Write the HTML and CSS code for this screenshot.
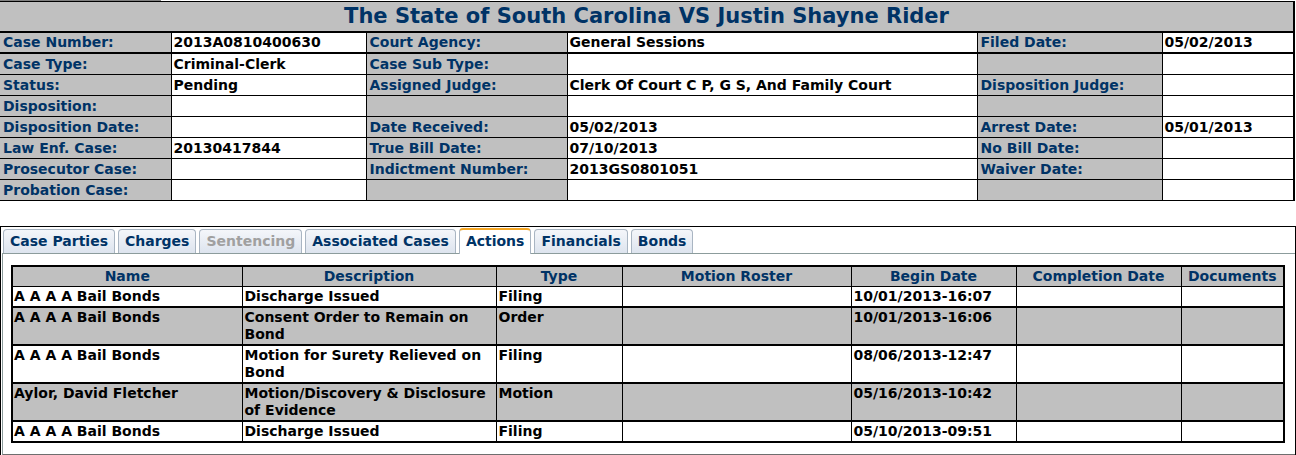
FILE: index.html
```html
<!DOCTYPE html>
<html lang="en">
<head>
  <meta charset="UTF-8" />
  <title>Case Details</title>
  <link rel="stylesheet" href="styles.css">
</head>
<body>
  <div class="scroll-strip"></div>

  <table class="case-table">
    <colgroup>
      <col class="c1"><col class="c2"><col class="c3"><col class="c4"><col class="c5"><col class="c6">
    </colgroup>
    <tr>
      <th colspan="6" class="title">The State of South Carolina VS Justin Shayne Rider</th>
    </tr>
    <tr class="first">
      <td class="lbl">Case Number:</td><td>2013A0810400630</td>
      <td class="lbl">Court Agency:</td><td>General Sessions</td>
      <td class="lbl">Filed Date:</td><td>05/02/2013</td>
    </tr>
    <tr>
      <td class="lbl">Case Type:</td><td>Criminal-Clerk</td>
      <td class="lbl">Case Sub Type:</td><td></td>
      <td class="lbl"></td><td></td>
    </tr>
    <tr>
      <td class="lbl">Status:</td><td>Pending</td>
      <td class="lbl">Assigned Judge:</td><td>Clerk Of Court C P, G S, And Family Court</td>
      <td class="lbl">Disposition Judge:</td><td></td>
    </tr>
    <tr>
      <td class="lbl">Disposition:</td><td></td>
      <td class="lbl"></td><td></td>
      <td class="lbl"></td><td></td>
    </tr>
    <tr>
      <td class="lbl">Disposition Date:</td><td></td>
      <td class="lbl">Date Received:</td><td>05/02/2013</td>
      <td class="lbl">Arrest Date:</td><td>05/01/2013</td>
    </tr>
    <tr>
      <td class="lbl">Law Enf. Case:</td><td>20130417844</td>
      <td class="lbl">True Bill Date:</td><td>07/10/2013</td>
      <td class="lbl">No Bill Date:</td><td></td>
    </tr>
    <tr>
      <td class="lbl">Prosecutor Case:</td><td></td>
      <td class="lbl">Indictment Number:</td><td>2013GS0801051</td>
      <td class="lbl">Waiver Date:</td><td></td>
    </tr>
    <tr>
      <td class="lbl">Probation Case:</td><td></td>
      <td class="lbl"></td><td></td>
      <td class="lbl"></td><td></td>
    </tr>
  </table>

  <div class="tab-box">
    <ul class="tabs">
      <li>Case Parties</li>
      <li>Charges</li>
      <li class="disabled">Sentencing</li>
      <li>Associated Cases</li>
      <li class="active">Actions</li>
      <li>Financials</li>
      <li>Bonds</li>
    </ul>
    <div class="tab-panel">
      <table class="actions">
        <colgroup>
          <col class="a1"><col class="a2"><col class="a3"><col class="a4"><col class="a5"><col class="a6"><col class="a7">
        </colgroup>
        <tr>
          <th>Name</th><th>Description</th><th>Type</th><th>Motion Roster</th>
          <th>Begin Date</th><th>Completion Date</th><th>Documents</th>
        </tr>
        <tr>
          <td>A A A A Bail Bonds</td><td>Discharge Issued</td><td>Filing</td><td></td>
          <td>10/01/2013-16:07</td><td></td><td></td>
        </tr>
        <tr class="alt">
          <td>A A A A Bail Bonds</td><td>Consent Order to Remain on Bond</td><td>Order</td><td></td>
          <td>10/01/2013-16:06</td><td></td><td></td>
        </tr>
        <tr>
          <td>A A A A Bail Bonds</td><td>Motion for Surety Relieved on Bond</td><td>Filing</td><td></td>
          <td>08/06/2013-12:47</td><td></td><td></td>
        </tr>
        <tr class="alt">
          <td>Aylor, David Fletcher</td><td>Motion/Discovery &amp; Disclosure of Evidence</td><td>Motion</td><td></td>
          <td>05/16/2013-10:42</td><td></td><td></td>
        </tr>
        <tr class="last">
          <td>A A A A Bail Bonds</td><td>Discharge Issued</td><td>Filing</td><td></td>
          <td>05/10/2013-09:51</td><td></td><td></td>
        </tr>
      </table>
    </div>
  </div>
</body>
</html>
```

FILE: styles.css
```css
body {
  margin: 0;
  font-family: Tahoma, "DejaVu Sans", Verdana, sans-serif;
  font-size: 14px;
  font-weight: bold;
  color: #000;
  background: #fff;
}
.scroll-strip {
  width: 161px;
  height: 1px;
  background: #808080;
}
.case-table {
  width: 1294px;
  border-collapse: collapse;
  table-layout: fixed;
  border-top: 1px solid #000;
  border-right: 2px solid #000;
  border-bottom: 1px solid #000;
}
.c1 { width: 171px; }
.c2 { width: 195px; }
.c3 { width: 201px; }
.c4 { width: 410px; }
.c5 { width: 185px; }
.c6 { width: 132px; }
.case-table td {
  border: 1px solid #000;
  padding: 0 2px;
  height: 20px;
  line-height: 20px;
  white-space: nowrap;
  overflow: hidden;
}
.case-table tr.first td {
  border-bottom-width: 2px;
  height: 19px;
  line-height: 19px;
}
.case-table td.lbl {
  background: #c0c0c0;
  color: #003366;
  padding-left: 3px;
}
.case-table tr td:first-child {
  border-left: none;
}
.title {
  background: #c0c0c0;
  color: #003366;
  font-size: 21px;
  height: 29px;
  line-height: 29px;
  text-align: center;
  border-bottom: 2px solid #000;
  padding: 0;
}
.tab-box {
  margin-top: 25px;
  width: 1293px;
  border: 1px solid #000;
  padding: 1px 0 0 1px;
}
.tabs {
  list-style: none;
  margin: 0;
  padding: 0 0 0 1px;
  display: flex;
  gap: 3px;
  height: 25px;
  align-items: flex-end;
}
.tabs li {
  height: 23px;
  line-height: 23px;
  padding: 0 6px;
  border: 1px solid #a9b5c2;
  border-bottom: none;
  border-radius: 4px 4px 0 0;
  background: linear-gradient(#f4f6fa, #dde4ee);
  color: #003366;
}
.tabs li.disabled {
  color: #a0a0a0;
}
.tabs li.active {
  height: 24px;
  background: #fff;
  border-top: 2px solid #f5a623;
  margin-bottom: -1px;
  position: relative;
}
.tab-panel {
  border-top: 1px solid #8c9c9c;
  border-left: 1px solid #8c9c9c;
  border-bottom: 2px solid #6e6e6e;
  padding: 11px 10px 11px 8px;
}
.actions {
  width: 1272px;
  border-collapse: collapse;
  table-layout: fixed;
  border: 2px solid #000;
}
.a1 { width: 230px; }
.a2 { width: 254px; }
.a3 { width: 126px; }
.a4 { width: 229px; }
.a5 { width: 165px; }
.a6 { width: 165px; }
.a7 { width: 103px; }
.actions th {
  background: #c0c0c0;
  color: #003366;
  border: 1px solid #000;
  line-height: 17px;
  padding: 1px 1px 1px;
  white-space: nowrap;
}
.actions td {
  border: 1px solid #000;
  line-height: 17px;
  padding: 1px 2px 1px;
  vertical-align: top;
}
.actions td:first-child {
  padding-left: 1px;
}
.actions tr.alt td {
  background: #c0c0c0;
  border-top-width: 2px;
  border-bottom-width: 2px;
}
.actions tr.last td {
  border-top-width: 2px;
}
```
